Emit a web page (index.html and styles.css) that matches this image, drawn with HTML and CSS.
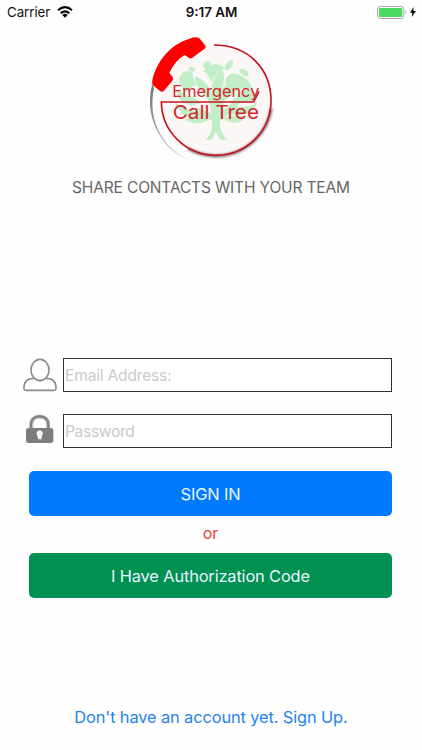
FILE: index.html
```html
<!DOCTYPE html>
<html lang="en">
<head>
<meta charset="utf-8">
<title>Emergency Call Tree</title>
<link rel="stylesheet" href="styles.css">
</head>
<body>
<div class="screen">
  <header class="status">
    <div class="status-left">
      <span class="carrier">Carrier</span>
      <svg class="wifi" viewBox="0 0 48 36"><g fill="none" stroke="#000" stroke-width="6"><path d="M3 13Q24 -6 45 13"/><path d="M11 22Q24 10 37 22"/></g><path d="M16 27Q24 20 32 27L24 35Z"/></svg>
    </div>
    <span class="time">9:17 AM</span>
    <div class="status-right">
      <svg class="battery" viewBox="0 0 90 39"><rect x="1.5" y="1.5" width="79" height="36" rx="8" fill="#fff" stroke="#a9a9a9" stroke-width="3"/><rect x="6" y="6" width="70" height="27" rx="3" fill="#4cd964"/><path d="M84 13Q89 19 84 26Z" fill="#999"/></svg>
      <svg class="bolt" viewBox="0 0 18 30"><path d="M11 0L0 17H7L5 30L18 12H10Z"/></svg>
    </div>
  </header>

  <svg class="logo" viewBox="0 0 426 408" role="img">
    <defs>
      <linearGradient id="arc" x1="0" y1="0" x2="0" y2="1"><stop offset="0" stop-color="#777"/><stop offset=".55" stop-color="#999"/><stop offset="1" stop-color="#eee"/></linearGradient>
      <filter id="soft" x="-10%" y="-10%" width="120%" height="120%"><feGaussianBlur stdDeviation="2.5"/></filter>
    </defs>
    <circle cx="228" cy="211" r="165" fill="#fcf7f7"/>
    <g fill="#c1eec6">
      <path d="M196 330Q222 306 216 272Q190 263 168 233Q200 238 213 250Q212 205 184 182Q166 168 164 139Q199 150 214 187Q214 143 246 116Q262 151 238 186Q264 150 293 151Q290 190 252 214L241 244Q268 233 280 206Q306 194 308 197Q298 233 268 251L239 274Q237 307 263 329H241L227 306L216 329Z"/>
      <path d="M190 124Q222 86 258 116Q226 122 215 157Q207 136 190 124Z"/>
      <path d="M116 151Q126 113 158 128Q158 150 172 168Q151 163 146 190Q121 178 116 151Z"/>
      <path d="M108 184Q121 181 139 197Q164 199 183 220Q124 239 108 184Z"/>
      <path d="M104 216Q138 244 183 245L194 257Q128 279 104 216Z"/>
      <path d="M132 264Q167 268 187 258L205 269Q165 294 132 264Z"/>
      <path d="M254 160Q261 122 294 133Q330 145 339 182Q308 166 283 189Q287 164 254 160Z"/>
      <path d="M290 192Q323 165 349 191Q345 221 295 218Z"/>
      <path d="M283 229Q321 235 351 217Q333 266 268 252Z"/>
      <path d="M249 264Q283 250 320 262Q284 294 249 264Z"/>
      <ellipse cx="201" cy="104" rx="13" ry="9" transform="rotate(-35 201 104)"/>
      <ellipse cx="267" cy="106" rx="17" ry="9" transform="rotate(-55 267 106)"/>
      <ellipse cx="156" cy="118" rx="10" ry="7"/>
      <ellipse cx="312" cy="127" rx="16" ry="9" transform="rotate(35 312 127)"/>
      <ellipse cx="132" cy="151" rx="8" ry="17" transform="rotate(-12 132 151)"/>
    </g>
    <path d="M394 235A168 168 0 0 1 145 356" fill="none" stroke="#444" stroke-width="9" filter="url(#soft)" opacity=".7"/>
    <path d="M222 45C326 45 393 118 393 211C393 306 318 376 228 376C135 376 65 302 64 216H341L357 184" fill="none" stroke="#c51620" stroke-width="5"/>
    <path d="M37 162C20 220 33 278 66 327C87 358 113 378 147 391C109 371 80 345 61 312C37 270 32 222 42 174Z" fill="url(#arc)"/>
    <path d="M149 26Q165 18 178 25Q188 36 195 46Q200 52 193 57L156 84Q150 88 143 81L134 75Q108 89 88 128L98 142Q101 147 97 152L72 182Q66 188 59 182L39 166Q34 161 37 152C46 102 88 42 149 26Z" fill="#f00"/>
    <g class="logo-text">
      <text class="line-one" x="97" y="201" textLength="261" lengthAdjust="spacingAndGlyphs">Emergency</text>
      <text class="line-two" x="98" y="266" textLength="259" lengthAdjust="spacingAndGlyphs">Call Tree</text>
    </g>
  </svg>
  <h1 class="tagline">SHARE CONTACTS WITH YOUR TEAM</h1>

  <form class="form">
    <div class="row">
      <svg class="icon" viewBox="0 0 108 105"><g fill="none" stroke="#8b8b8b" stroke-width="5"><ellipse cx="54" cy="36" rx="27" ry="32"/><path d="M35 61Q7 62 6 87Q4 97 14 97H94Q104 97 102 87Q101 62 73 61"/></g></svg>
      <input class="field email" type="text" placeholder="Email Address:">
    </div>
    <div class="row">
      <svg class="icon" viewBox="0 0 108 105"><path d="M28 45V32C28 1 78 1 78 32V45" fill="none" stroke="#dedcd5" stroke-width="14"/><path d="M27 46V31C27 -1 79 -1 79 31V46" fill="none" stroke="#858585" stroke-width="8"/><rect x="12" y="42" width="82" height="45" rx="8" fill="#7d7d7d"/><path d="M45 63C36 45 70 45 61 63L58 76H49Z" fill="#f5f4ed"/></svg>
      <input class="field password" type="text" placeholder="Password">
    </div>
    <button class="btn signin" type="button"><span>SIGN IN</span></button>
    <div class="or">or</div>
    <button class="btn code" type="button"><span>I Have Authorization Code</span></button>
  </form>
  <a class="signup"><span>Don't have an account yet. Sign Up.</span></a>
</div>
</body>
</html>
```
FILE: styles.css
```css
* { box-sizing: border-box; }
body { margin: 0; background: #fff; font-family: Inter, "Liberation Sans", sans-serif; }
.screen { width: 422px; height: 750px; display: flex; flex-direction: column; align-items: center; overflow: hidden; background: #fefefe; }
.status { width: 100%; height: 24px; flex: none; display: grid; grid-template-columns: 1fr auto 1fr; align-items: center; padding: 0 6px 0 7px; color: #111; }
.status-left, .status-right { display: flex; align-items: center; }
.status-left { gap: 7px; }
.status-right { justify-content: flex-end; gap: 3px; }
.carrier { font-size: 13.3px; letter-spacing: -0.05px; }
.time { font-size: 13.4px; font-weight: 600; }
.wifi { width: 16px; height: 12px; }
.battery { width: 30px; height: 13px; }
.bolt { width: 6px; height: 10px; }
.logo { width: 142px; height: 136px; margin: 6px 0 0; flex: none; }
.logo-text { font-family: Inter, sans-serif; font-weight: 400; fill: #d2262b; }
.line-one { font-size: 49px; }
.line-two { font-size: 58px; }
.tagline { margin: 12px 0 0; font-size: 15.5px; line-height: 20px; font-weight: 400; letter-spacing: -0.15px; color: #666; white-space: nowrap; }
.form { width: 363px; margin: 160px 1px 0 0; display: flex; flex-direction: column; }
.row { display: flex; margin: 0 0 22px -7px; height: 34px; gap: 5px; }
.icon { width: 36px; height: 35px; flex: none; }
.field { flex: 1; min-width: 0; height: 34px; border: 1px solid #333; border-radius: 0; padding: 1px 2px 0 1px; background: #fff; font: 400 15.6px Inter, sans-serif; letter-spacing: -0.2px; outline: none; }
.password { letter-spacing: -0.35px; }
.field::placeholder { color: #c9c9ce; opacity: 1; }
.btn { height: 45px; border: 0; border-radius: 5px; color: #e9f5ff; font: 400 16.4px Inter, sans-serif; letter-spacing: -0.15px; }
.signin { background: #007aff; margin-top: 1px; }
.or { height: 37px; line-height: 35px; text-align: center; font-size: 16px; color: #ee3b36; }
.code { background: #009051; }
.signup { margin-top: 109px; line-height: 20px; font-size: 16.4px; letter-spacing: -0.12px; color: #2583e8; white-space: nowrap; }
```
